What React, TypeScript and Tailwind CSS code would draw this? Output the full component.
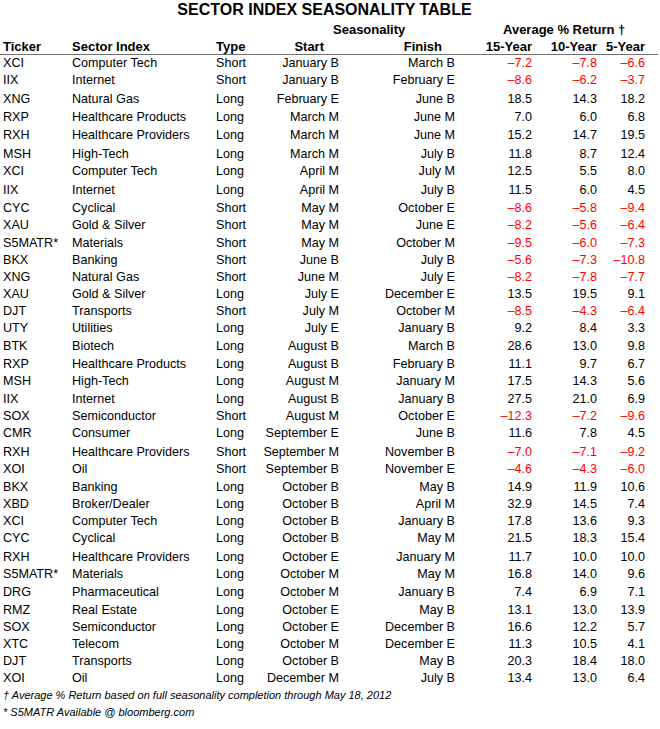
const ROW_H: Record<number, string> = {
  17: "h-[17px]",
  18: "h-[18px]",
  19: "h-[19px]",
};

// ticker, sector, type, start, finish, 15y, 10y, 5y, row height
const rows: [string, string, string, string, string, string, string, string, number][] = [
  ["XCI", "Computer Tech", "Short", "January B", "March B", "–7.2", "–7.8", "–6.6", 17],
  ["IIX", "Internet", "Short", "January B", "February E", "–8.6", "–6.2", "–3.7", 19],
  ["XNG", "Natural Gas", "Long", "February E", "June B", "18.5", "14.3", "18.2", 18],
  ["RXP", "Healthcare Products", "Long", "March M", "June M", "7.0", "6.0", "6.8", 18],
  ["RXH", "Healthcare Providers", "Long", "March M", "June M", "15.2", "14.7", "19.5", 19],
  ["MSH", "High-Tech", "Long", "March M", "July B", "11.8", "8.7", "12.4", 17],
  ["XCI", "Computer Tech", "Long", "April M", "July M", "12.5", "5.5", "8.0", 19],
  ["IIX", "Internet", "Long", "April M", "July B", "11.5", "6.0", "4.5", 18],
  ["CYC", "Cyclical", "Short", "May M", "October E", "–8.6", "–5.8", "–9.4", 17],
  ["XAU", "Gold & Silver", "Short", "May M", "June E", "–8.2", "–5.6", "–6.4", 18],
  ["S5MATR*", "Materials", "Short", "May M", "October M", "–9.5", "–6.0", "–7.3", 17],
  ["BKX", "Banking", "Short", "June B", "July B", "–5.6", "–7.3", "–10.8", 17],
  ["XNG", "Natural Gas", "Short", "June M", "July E", "–8.2", "–7.8", "–7.7", 17],
  ["XAU", "Gold & Silver", "Long", "July E", "December E", "13.5", "19.5", "9.1", 17],
  ["DJT", "Transports", "Short", "July M", "October M", "–8.5", "–4.3", "–6.4", 17],
  ["UTY", "Utilities", "Long", "July E", "January B", "9.2", "8.4", "3.3", 18],
  ["BTK", "Biotech", "Long", "August B", "March B", "28.6", "13.0", "9.8", 18],
  ["RXP", "Healthcare Products", "Long", "August B", "February B", "11.1", "9.7", "6.7", 17],
  ["MSH", "High-Tech", "Long", "August M", "January M", "17.5", "14.3", "5.6", 18],
  ["IIX", "Internet", "Long", "August B", "January B", "27.5", "21.0", "6.9", 17],
  ["SOX", "Semiconductor", "Short", "August M", "October E", "–12.3", "–7.2", "–9.6", 17],
  ["CMR", "Consumer", "Long", "September E", "June B", "11.6", "7.8", "4.5", 19],
  ["RXH", "Healthcare Providers", "Short", "September M", "November B", "–7.0", "–7.1", "–9.2", 17],
  ["XOI", "Oil", "Short", "September B", "November E", "–4.6", "–4.3", "–6.0", 18],
  ["BKX", "Banking", "Long", "October B", "May B", "14.9", "11.9", "10.6", 17],
  ["XBD", "Broker/Dealer", "Long", "October B", "April M", "32.9", "14.5", "7.4", 17],
  ["XCI", "Computer Tech", "Long", "October B", "January B", "17.8", "13.6", "9.3", 17],
  ["CYC", "Cyclical", "Long", "October B", "May M", "21.5", "18.3", "15.4", 19],
  ["RXH", "Healthcare Providers", "Long", "October E", "January M", "11.7", "10.0", "10.0", 17],
  ["S5MATR*", "Materials", "Long", "October M", "May M", "16.8", "14.0", "9.6", 18],
  ["DRG", "Pharmaceutical", "Long", "October M", "January B", "7.4", "6.9", "7.1", 18],
  ["RMZ", "Real Estate", "Long", "October E", "May B", "13.1", "13.0", "13.9", 17],
  ["SOX", "Semiconductor", "Long", "October E", "December B", "16.6", "12.2", "5.7", 17],
  ["XTC", "Telecom", "Long", "October M", "December E", "11.3", "10.5", "4.1", 17],
  ["DJT", "Transports", "Long", "October B", "May B", "20.3", "18.4", "18.0", 17],
  ["XOI", "Oil", "Long", "December M", "July B", "13.4", "13.0", "6.4", 17],
];

function Num({ v, className }: { v: string; className: string }) {
  const neg = v.startsWith("–");
  return <div className={`${className} text-right ${neg ? "text-[#ff0000]" : "text-black"}`}>{v}</div>;
}

export default function App() {
  return (
    <div className="w-[660px] h-[729px] bg-white text-black font-['Liberation_Sans',Arial,sans-serif] overflow-hidden whitespace-nowrap">
      <div className="w-[649px] h-[21px] text-center text-[16px] leading-[19px] font-bold">
        SECTOR INDEX SEASONALITY TABLE
      </div>

      <div className="flex h-[17px] text-[13px] leading-[17px] font-bold">
        <div className="w-[333px]" />
        <div className="w-[170px]">Seasonality</div>
        <div>Average % Return †</div>
      </div>

      <div className="flex h-[16px] text-[13px] leading-[17px] font-bold">
        <div className="w-[72px] pl-[3px]">Ticker</div>
        <div className="w-[144px]">Sector Index</div>
        <div className="w-[40px]">Type</div>
        <div className="w-[83px] text-right pr-[15px]">Start</div>
        <div className="w-[116px] text-right pr-[13px]">Finish</div>
        <div className="w-[77px] text-right">15-Year</div>
        <div className="w-[65px] text-right">10-Year</div>
        <div className="w-[48px] text-right">5-Year</div>
      </div>

      <div className="w-[658px] h-px bg-[#707070]" />

      <div className="text-[12.6px] leading-[17px]">
        {rows.map((r, i) => (
          <div key={i} className={`flex items-start ${ROW_H[r[8]]}`}>
            <div className="w-[72px] pl-[3px]">{r[0]}</div>
            <div className="w-[144px]">{r[1]}</div>
            <div className="w-[40px]">{r[2]}</div>
            <div className="w-[83px] text-right">{r[3]}</div>
            <div className="w-[116px] text-right">{r[4]}</div>
            <Num v={r[5]} className="w-[77px]" />
            <Num v={r[6]} className="w-[65px]" />
            <Num v={r[7]} className="w-[48px]" />
          </div>
        ))}
      </div>

      <div className="pl-[3px] text-[11px] leading-[17px] italic">
        <div className="h-[17px]">† Average % Return based on full seasonality completion through May 18, 2012</div>
        <div className="h-[17px]">* S5MATR Available @ bloomberg.com</div>
      </div>
    </div>
  );
}
